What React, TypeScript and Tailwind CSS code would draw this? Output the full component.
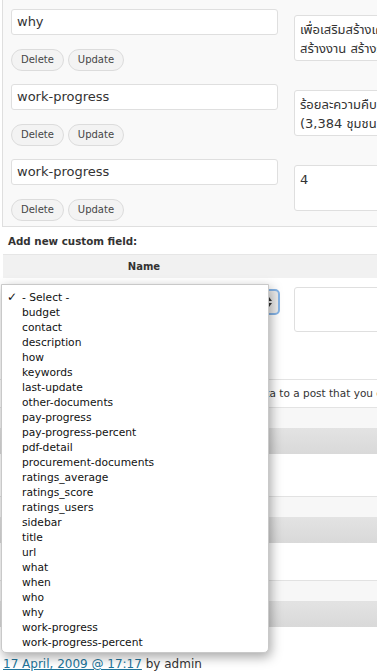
import React from "react";

const FONT = { fontFamily: "'DejaVu Sans', 'Noto Sans', 'Noto Sans Thai', sans-serif" };

function Btn({ children }: { children: React.ReactNode }) {
  return (
    <div className="h-[22px] rounded-full border border-[#dcdcdc] bg-[#f3f3f3] px-[9px] text-[10px] leading-[20px] text-[#464646]">
      {children}
    </div>
  );
}

function Row({ name, lines, last }: { name: string; lines: string[]; last?: boolean }) {
  return (
    <div className={last ? "flex h-[66px] items-start" : "flex h-[75px] items-start"}>
      <div className="flex w-[267px] shrink-0 flex-col">
        <div className="h-[26px] rounded-[3px] border border-[#dfdfdf] bg-white pl-[5px] text-[13px] leading-[24px] text-[#333]">
          {name}
        </div>
        <div className="mt-[14px] flex gap-[4px]">
          <Btn>Delete</Btn>
          <Btn>Update</Btn>
        </div>
      </div>
      <div className="ml-[16px] mt-[6px] h-[46px] w-[200px] shrink-0 overflow-hidden whitespace-nowrap rounded-[3px] border border-[#dfdfdf] bg-white pl-[5px] pt-[4px] text-[13px] leading-[19px] text-[#333]">
        {lines.map((l, i) => (
          <div key={i}>{l}</div>
        ))}
      </div>
    </div>
  );
}

const items = [
  "- Select -",
  "budget",
  "contact",
  "description",
  "how",
  "keywords",
  "last-update",
  "other-documents",
  "pay-progress",
  "pay-progress-percent",
  "pdf-detail",
  "procurement-documents",
  "ratings_average",
  "ratings_score",
  "ratings_users",
  "sidebar",
  "title",
  "url",
  "what",
  "when",
  "who",
  "why",
  "work-progress",
  "work-progress-percent",
];

export default function App() {
  return (
    <div className="relative h-[671px] w-[377px] overflow-hidden bg-white" style={FONT}>
      {/* existing custom fields panel */}
      <div className="ml-[2px] h-[227px] overflow-hidden border-b border-l border-[#dfdfdf] bg-[#f9f9f9] pl-[8px] pt-[9px]">
        <Row name="why" lines={["เพื่อเสริมสร้างเศรษฐกิจชุมชน", "สร้างงาน สร้างรายได้"]} />
        <Row name="work-progress" lines={["ร้อยละความคืบหน้า", "(3,384 ชุมชน)"]} />
        <Row name="work-progress" lines={["4"]} last />
      </div>

      <div className="mt-[7px] pl-[8px] text-[10.3px] font-bold leading-[14px] text-[#333]">
        Add new custom field:
      </div>

      <div className="ml-[3px] mt-[6px] flex h-[24px] border-t border-[#e6e6e6] bg-[#f1f1f1]">
        <div className="w-[282px] text-center text-[10px] font-bold leading-[23px] text-[#333]">Name</div>
      </div>

      <div className="flex h-[101px] items-start pt-[9px]">
        <div className="ml-[11px] mt-[2px] flex h-[26px] w-[269px] shrink-0 items-center justify-end rounded-[5px] border-2 border-[#86b4e6] bg-[#ececec] pr-[6px]">
          <svg width="6" height="10" viewBox="0 0 6 10">
            <path d="M3 0 L6 4 L0 4 Z" fill="#333" />
            <path d="M3 10 L6 6 L0 6 Z" fill="#333" />
          </svg>
        </div>
        <div className="ml-[14px] h-[45px] w-[200px] shrink-0 rounded-[3px] border border-[#dfdfdf] bg-white" />
      </div>

      <div className="flex h-[29px] items-center overflow-hidden whitespace-nowrap border-y border-[#e3e3e3] text-[10.5px] text-[#333]">
        <span className="w-[276px] shrink-0 overflow-hidden text-right">metadata</span>
        <span className="whitespace-pre"> to a post that you can use in your theme.</span>
      </div>
      <div className="h-[20px] bg-[#f7f7f7]" />
      <div className="h-[26px] bg-gradient-to-b from-[#e3e3e3] to-[#d9d9d9]" />
      <div className="h-[42px] bg-white" />
      <div className="h-[21px] border-t border-[#e2e2e2] bg-[#f7f7f7]" />
      <div className="h-[26px] bg-gradient-to-b from-[#e3e3e3] to-[#d9d9d9]" />
      <div className="h-[37px] bg-white" />
      <div className="h-[22px] border-y border-[#e2e2e2] bg-[#f7f7f7]" />
      <div className="h-[25px] bg-gradient-to-b from-[#e3e3e3] to-[#d9d9d9]" />
      <div className="h-[29px] bg-white" />
      <div className="whitespace-nowrap pl-[3px] text-[12px] leading-[16px] text-[#333]">
        <span className="text-[#21759b] underline">17 April, 2009 @ 17:17</span> by admin
      </div>

      {/* popup menu */}
      <div className="absolute left-[1px] top-[284px] h-[369px] w-[268px] rounded-b-[5px] border border-[#c9c9c9] bg-white pt-[4.5px] shadow-[2px_4px_12px_rgba(0,0,0,0.35)]">
        {items.map((it, i) => (
          <div key={it} className="flex h-[15px] items-center whitespace-nowrap text-[10.7px] leading-[15px] text-[#111]">
            <span className="w-[20px] shrink-0 pl-[5px] text-[12px]">{i === 0 ? "✓" : ""}</span>
            <span>{it}</span>
          </div>
        ))}
      </div>
    </div>
  );
}
